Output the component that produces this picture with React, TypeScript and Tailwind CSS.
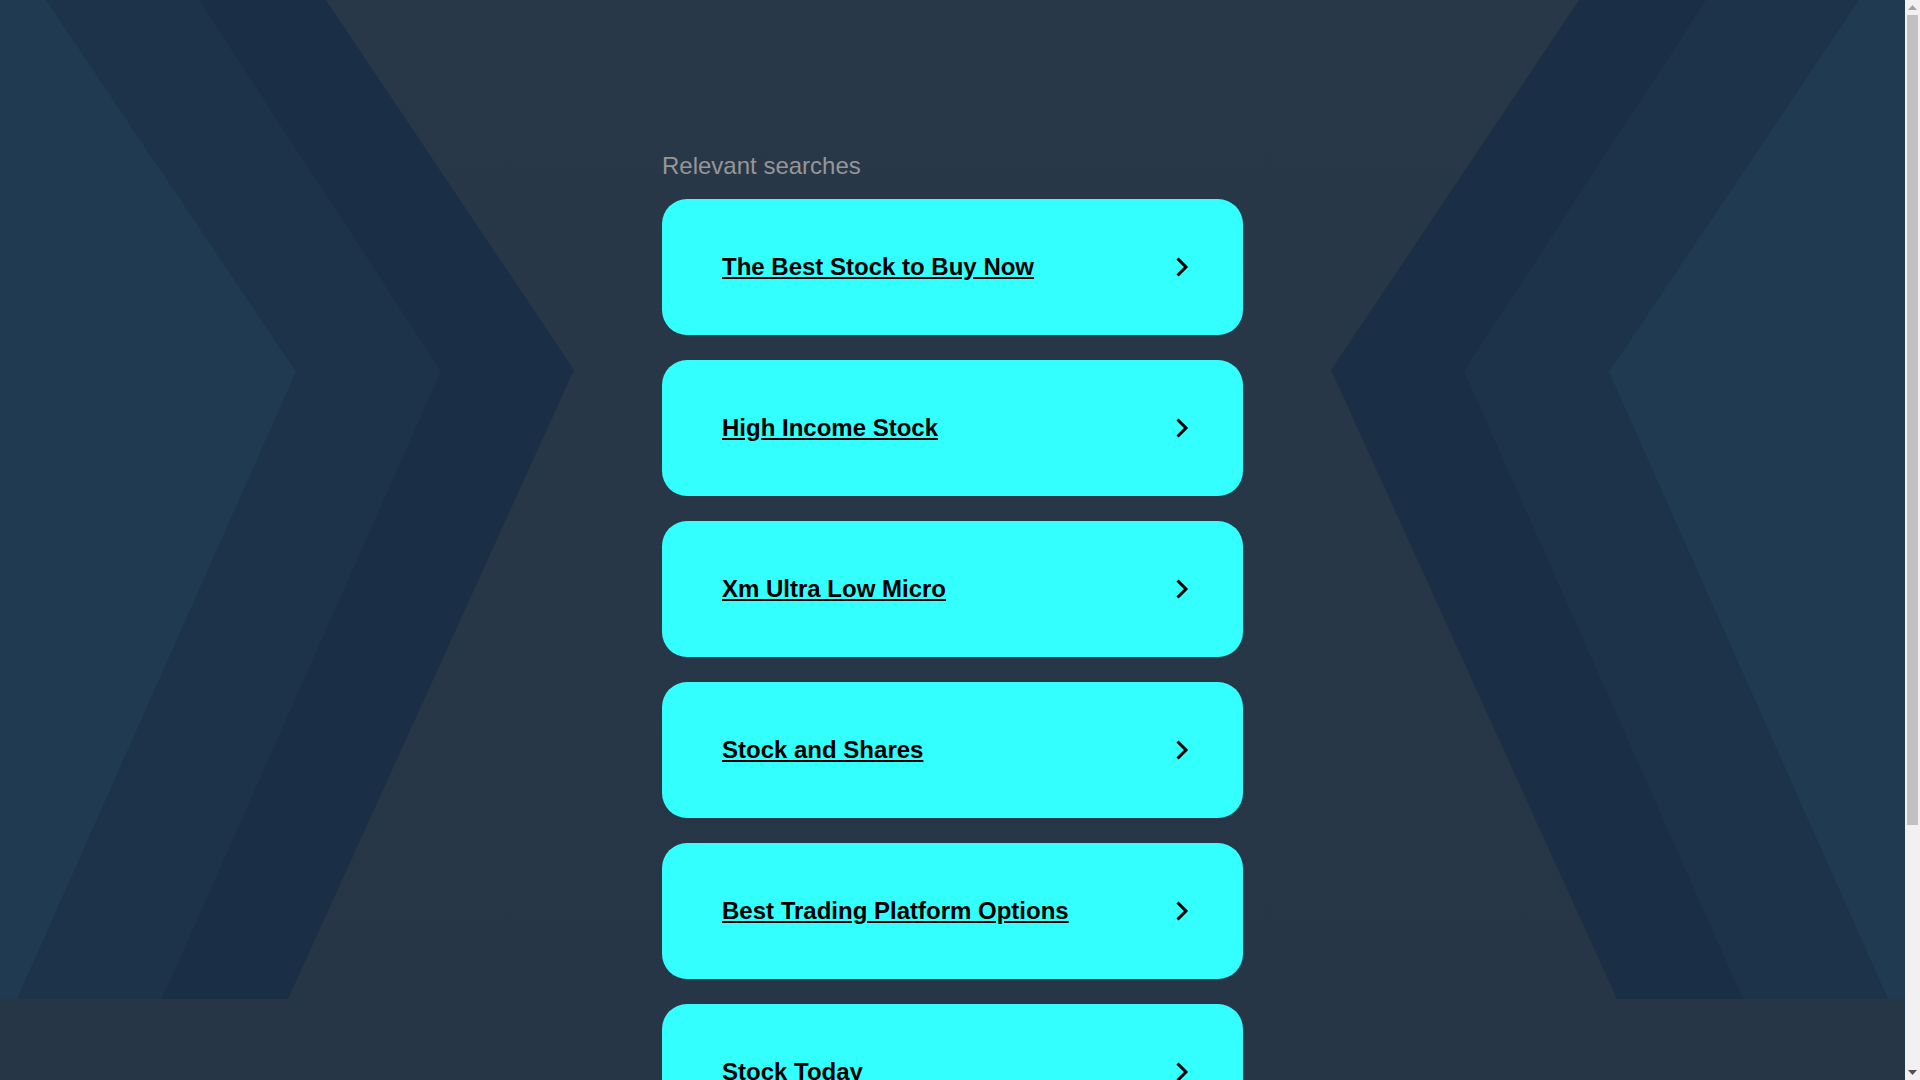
import React from "react";

const items = [
  "The Best Stock to Buy Now",
  "High Income Stock",
  "Xm Ultra Low Micro",
  "Stock and Shares",
  "Best Trading Platform Options",
  "Stock Today",
];

function Chevron() {
  return (
    <svg width="14" height="20" viewBox="0 0 14 20" className="shrink-0" aria-hidden="true">
      <polyline points="2.5,1.5 11,10 2.5,18.5" fill="none" stroke="#000" strokeWidth="3" />
    </svg>
  );
}

function Background() {
  return (
    <svg
      className="absolute left-0 top-0 h-[999px] w-full"
      viewBox="0 0 1905 999"
      preserveAspectRatio="none"
      aria-hidden="true"
    >
      <defs>
        <linearGradient id="base" x1="0" y1="0" x2="0" y2="1">
          <stop offset="0" stopColor="#293848" />
          <stop offset="1" stopColor="#263646" />
        </linearGradient>
      </defs>
      <rect x="0" y="0" width="1905" height="999" fill="url(#base)" />
      <polygon points="0,0 326,0 574,370 288,999 0,999" fill="#1a2f45" />
      <polygon points="0,0 199,0 441,371 162,999 0,999" fill="#1d334a" />
      <polygon points="0,0 46,0 296,372 17,999 0,999" fill="#203a51" />
      <polygon points="1905,0 1579,0 1331,370 1617,999 1905,999" fill="#1a2f45" />
      <polygon points="1905,0 1706,0 1464,371 1743,999 1905,999" fill="#1d334a" />
      <polygon points="1905,0 1859,0 1609,372 1888,999 1905,999" fill="#203a51" />
    </svg>
  );
}

function Scrollbar() {
  return (
    <div className="flex h-full w-[15px] shrink-0 flex-col bg-[#f1f1f1]">
      <div className="flex h-[15px] items-center justify-center">
        <svg width="9" height="5" viewBox="0 0 9 5" aria-hidden="true">
          <polygon points="0,5 4.5,0 9,5" fill="#a3a3a3" />
        </svg>
      </div>
      <div className="flex flex-1 flex-col px-[2px]">
        <div className="h-[810px] bg-[#c1c1c1]" />
      </div>
      <div className="flex h-[15px] items-center justify-center">
        <svg width="9" height="5" viewBox="0 0 9 5" aria-hidden="true">
          <polygon points="0,0 4.5,5 9,0" fill="#505050" />
        </svg>
      </div>
    </div>
  );
}

export default function App() {
  return (
    <div className="flex h-screen w-full overflow-hidden bg-[#263646] font-['Liberation_Sans',Arial,sans-serif]">
      <div className="relative h-full flex-1 overflow-hidden">
        <Background />
        <div className="relative mx-auto w-[581px] pb-[260px] pt-[152px]">
          <div className="text-[24px] leading-[28px] text-[#969696]">Relevant searches</div>
          <div className="mt-[19px] flex flex-col gap-[25px]">
            {items.map((t) => (
              <a
                key={t}
                href="#"
                className="flex h-[136px] shrink-0 items-center justify-between rounded-[25px] bg-[#33ffff] pl-[60px] pr-[54px]"
              >
                <span className="text-[24px] font-bold leading-[28px] text-black underline">{t}</span>
                <Chevron />
              </a>
            ))}
          </div>
        </div>
      </div>
      <Scrollbar />
    </div>
  );
}
